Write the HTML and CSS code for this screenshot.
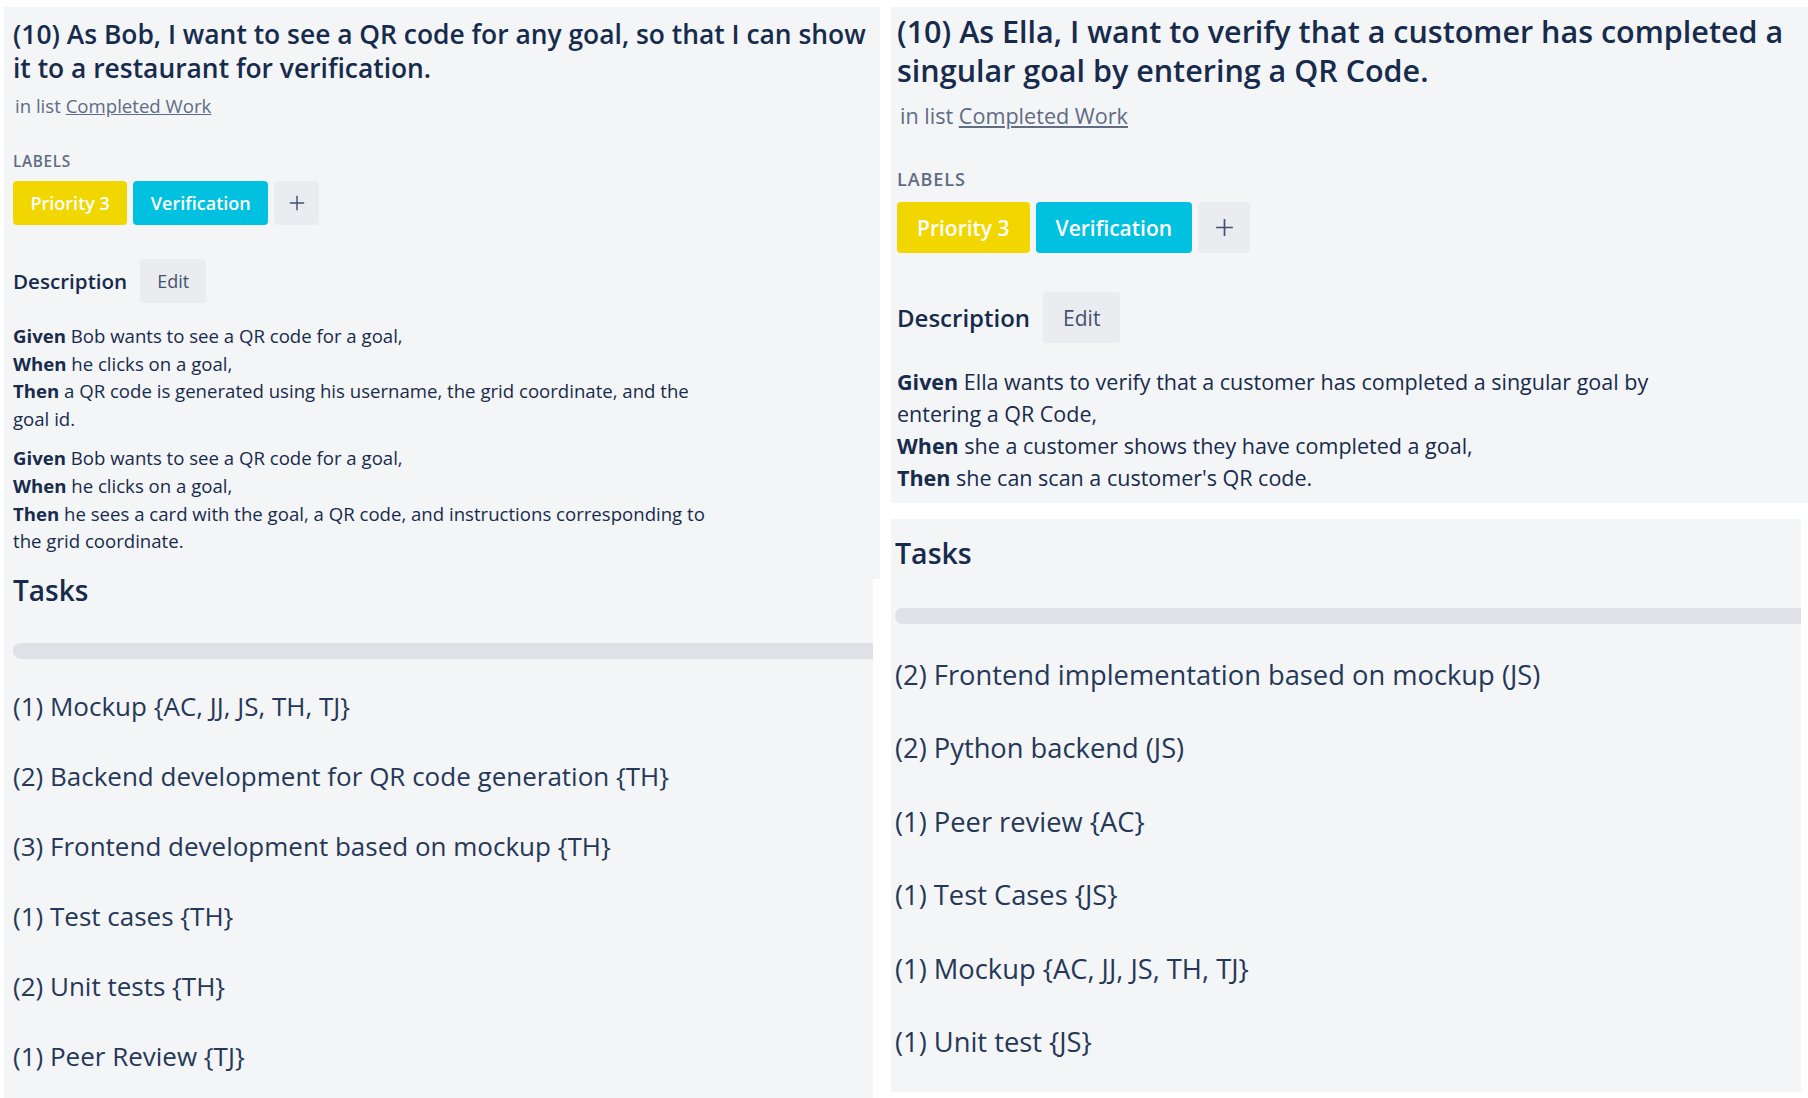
FILE: index.html
```html
<!DOCTYPE html>
<html lang="en">
<head>
<meta charset="utf-8">
<title>Card details</title>
<link rel="stylesheet" href="styles.css">
</head>
<body>
<div class="collage">
  <div class="column column-left">
    <section class="panel card-left card-left-top">
      <h2 class="card-title">(10) As Bob, I want to see a QR code for any goal, so that I can show<br>it to a restaurant for verification.</h2>
      <p class="in-list">in list <a href="#" class="list-link">Completed Work</a></p>
      <h3 class="labels-title">LABELS</h3>
      <div class="label-row">
        <span class="label label-yellow">Priority 3</span>
        <span class="label label-blue">Verification</span>
        <span class="label-add"><svg viewBox="0 0 20 20" class="plus-icon"><path d="M10 2v16M2 10h16"/></svg></span>
      </div>
      <div class="desc-head">
        <h3 class="desc-title">Description</h3>
        <span class="edit-btn">Edit</span>
      </div>
      <div class="desc-body">
        <p><strong>Given</strong> Bob wants to see a QR code for a goal,<br><strong>When</strong> he clicks on a goal,<br><strong>Then</strong> a QR code is generated using his username, the grid coordinate, and the goal id.</p>
        <p><strong>Given</strong> Bob wants to see a QR code for a goal,<br><strong>When</strong> he clicks on a goal,<br><strong>Then</strong> he sees a card with the goal, a QR code, and instructions corresponding to the grid coordinate.</p>
      </div>
    </section>
    <section class="panel card-left card-left-bottom">
      <h3 class="tasks-title">Tasks</h3>
      <div class="progress"></div>
      <ul class="task-list">
        <li>(1) Mockup {AC, JJ, JS, TH, TJ}</li>
        <li>(2) Backend development for QR code generation {TH}</li>
        <li>(3) Frontend development based on mockup {TH}</li>
        <li>(1) Test cases {TH}</li>
        <li>(2) Unit tests {TH}</li>
        <li>(1) Peer Review {TJ}</li>
      </ul>
    </section>
  </div>
  <div class="column column-right">
    <section class="panel card-right card-right-top">
      <h2 class="card-title">(10) As Ella, I want to verify that a customer has completed a<br>singular goal by entering a QR Code.</h2>
      <p class="in-list">in list <a href="#" class="list-link">Completed Work</a></p>
      <h3 class="labels-title">LABELS</h3>
      <div class="label-row">
        <span class="label label-yellow">Priority 3</span>
        <span class="label label-blue">Verification</span>
        <span class="label-add"><svg viewBox="0 0 20 20" class="plus-icon"><path d="M10 2v16M2 10h16"/></svg></span>
      </div>
      <div class="desc-head">
        <h3 class="desc-title">Description</h3>
        <span class="edit-btn">Edit</span>
      </div>
      <div class="desc-body">
        <p><strong>Given</strong> Ella wants to verify that a customer has completed a singular goal by entering a QR Code,<br><strong>When</strong> she a customer shows they have completed a goal,<br><strong>Then</strong> she can scan a customer's QR code.</p>
      </div>
    </section>
    <section class="panel card-right card-right-bottom">
      <h3 class="tasks-title">Tasks</h3>
      <div class="progress"></div>
      <ul class="task-list">
        <li>(2) Frontend implementation based on mockup (JS)</li>
        <li>(2) Python backend (JS)</li>
        <li>(1) Peer review {AC}</li>
        <li>(1) Test Cases {JS}</li>
        <li>(1) Mockup {AC, JJ, JS, TH, TJ}</li>
        <li>(1) Unit test {JS}</li>
      </ul>
    </section>
  </div>
</div>
</body>
</html>
```

FILE: styles.css
```css
* { box-sizing: border-box; }

html, body {
  margin: 0;
  padding: 0;
  background: #ffffff;
}

body {
  width: 1808px;
  height: 1098px;
  overflow: hidden;
  font-family: "Open Sans", "Noto Sans", sans-serif;
  color: #172b4d;
}

.collage {
  display: flex;
  align-items: flex-start;
  padding: 7px 0 0 4px;
  gap: 11px;
}

.column {
  display: flex;
  flex-direction: column;
  align-items: flex-start;
}

.panel {
  background: #f4f5f7;
}

h2, h3, p, ul { margin: 0; padding: 0; }

.card-title {
  font-weight: 600;
  white-space: nowrap;
}

.in-list { color: #5e6c84; }

.list-link {
  color: #5e6c84;
  text-decoration: underline;
}

.labels-title {
  color: #5e6c84;
  font-weight: 600;
}

.label-row {
  display: flex;
}

.label {
  display: flex;
  align-items: center;
  color: #ffffff;
  font-weight: 600;
  border-radius: 4px;
}

.label-yellow { background: #f2d600; }
.label-blue { background: #00c2e0; }

.label-add {
  display: flex;
  align-items: center;
  justify-content: center;
  background: #ebecf0;
  border-radius: 4px;
}

.plus-icon {
  fill: none;
  stroke: #42526e;
  stroke-width: 1.6;
}

.desc-head {
  display: flex;
  align-items: center;
}

.desc-title {
  font-weight: 600;
}

.edit-btn {
  display: flex;
  align-items: center;
  background: #ebecf0;
  color: #42526e;
  border-radius: 4px;
}

.desc-body strong { font-weight: 700; }

.tasks-title { font-weight: 600; }

.progress {
  background: #dfe1e6;
  border-radius: 8px 0 0 8px;
  height: 16px;
}

.task-list {
  list-style: none;
  color: #253858;
}

/* ---------- left card ---------- */
.column-left { width: 876px; }

.card-left-top {
  width: 876px;
  height: 572px;
  padding: 11px 9px 0 9px;
}

.card-left .card-title {
  font-size: 26.4px;
  line-height: 33.5px;
}

.card-left .in-list {
  margin-top: 8px;
  padding-left: 2px;
  font-size: 18.6px;
  line-height: 26px;
}

.card-left .labels-title {
  margin-top: 31px;
  font-size: 15.3px;
  line-height: 22px;
  letter-spacing: 0.7px;
}

.card-left .label-row {
  margin-top: 9px;
  gap: 6px;
}

.card-left .label {
  height: 44px;
  padding: 0 17.5px;
  font-size: 18px;
}

.card-left .label-add {
  width: 45px;
  height: 44px;
}

.card-left .plus-icon {
  width: 18px;
  height: 18px;
}

.card-left .desc-head {
  margin-top: 34px;
  gap: 13px;
}

.card-left .desc-title {
  font-size: 20.6px;
  line-height: 28px;
}

.card-left .edit-btn {
  height: 44px;
  padding: 0 17px;
  font-size: 18px;
}

.card-left .desc-body {
  margin-top: 19px;
  max-width: 706px;
  font-size: 18.6px;
  line-height: 27.7px;
}

.card-left .desc-body p { margin-bottom: 11.3px; }

.card-left-bottom {
  width: 869px;
  height: 519px;
  padding: 0 0 0 9px;
}

.card-left-bottom .tasks-title {
  font-size: 28px;
  line-height: 22px;
}

.card-left-bottom .progress {
  margin-top: 42px;
  width: 860px;
}

.card-left-bottom .task-list {
  margin-top: 12px;
  font-size: 26px;
  line-height: 70px;
}

/* ---------- right card ---------- */
.column-right {
  width: 917px;
  gap: 16px;
}

.card-right-top {
  width: 917px;
  height: 496px;
  padding: 5px 6px 0 6px;
}

.card-right .card-title {
  font-size: 30.5px;
  line-height: 39px;
}

.card-right .in-list {
  margin-top: 10.5px;
  padding-left: 3px;
  font-size: 21.6px;
  line-height: 30px;
}

.card-right .labels-title {
  margin-top: 36.5px;
  font-size: 18px;
  line-height: 24px;
  letter-spacing: 0.9px;
}

.card-right .label-row {
  margin-top: 11px;
  gap: 6px;
}

.card-right .label {
  height: 51px;
  padding: 0 20px;
  font-size: 21px;
}

.card-right .label-add {
  width: 52px;
  height: 51px;
}

.card-right .plus-icon {
  width: 21px;
  height: 21px;
}

.card-right .desc-head {
  margin-top: 39px;
  gap: 13px;
}

.card-right .desc-title {
  font-size: 24px;
  line-height: 32px;
}

.card-right .edit-btn {
  height: 51px;
  padding: 0 20px;
  font-size: 21px;
}

.card-right .desc-body {
  margin-top: 22.5px;
  max-width: 800px;
  font-size: 21.5px;
  line-height: 32px;
}

.card-right-bottom {
  width: 910px;
  height: 573px;
  padding: 20px 0 0 4px;
}

.card-right-bottom .tasks-title {
  font-size: 28.5px;
  line-height: 28px;
}

.card-right-bottom .progress {
  margin-top: 41px;
  width: 906px;
}

.card-right-bottom .task-list {
  margin-top: 14px;
  font-size: 27.3px;
  line-height: 73.4px;
}
```
